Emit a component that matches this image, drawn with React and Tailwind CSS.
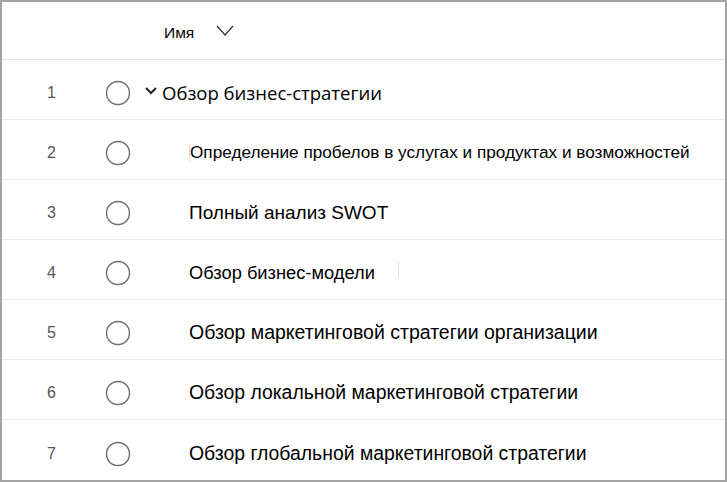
import React from 'react';

const rows = [
  { n: 1, text: 'Обзор бизнес-стратегии', size: 'text-[18.5px]', parent: true },
  { n: 2, text: 'Определение пробелов в услугах и продуктах и возможностей', size: 'text-[17.2px]', caret: true },
  { n: 3, text: 'Полный анализ SWOT', size: 'text-[19px]' },
  { n: 4, text: 'Обзор бизнес-модели', size: 'text-[18.3px]', tail: true },
  { n: 5, text: 'Обзор маркетинговой стратегии организации', size: 'text-[19.5px]' },
  { n: 6, text: 'Обзор локальной маркетинговой стратегии', size: 'text-[19.4px]' },
  { n: 7, text: 'Обзор глобальной маркетинговой стратегии', size: 'text-[19.4px]' },
];

const Circle = () => (
  <svg width="26" height="26" viewBox="0 0 26 26">
    <circle cx="13" cy="13" r="11.5" fill="none" stroke="#6b6b6b" strokeWidth="1.4" />
  </svg>
);

const App = () => {
  return (
    <div className="w-[727px] h-[482px] bg-white border-2 border-[#a3a3a3] font-['Liberation_Sans',Arial,sans-serif] text-black overflow-hidden">
      <div className="h-[58px] flex items-center border-b border-[#e6e6e6]">
        <div className="w-[162px]" />
        <span className="text-[15.5px] mt-[5px]">Имя</span>
        <svg className="ml-[22px]" width="18" height="11" viewBox="0 0 18 11">
          <path d="M1 1 L9 10 L17 1" fill="none" stroke="#333" strokeWidth="1.2" />
        </svg>
      </div>
      {rows.map((r) => (
        <div key={r.n} className="h-[60px] flex items-center pt-[7px] border-b border-[#ececec] last:border-b-0">
          <div className="w-[103px] pr-1 text-center text-[16px] text-[#555]">{r.n}</div>
          <Circle />
          {r.parent ? (
            <>
              <svg className="ml-[14px] mr-[5px] -mt-[5px]" width="12" height="8" viewBox="0 0 12 8">
                <path d="M1 1 L6 6 L11 1" fill="none" stroke="#222" strokeWidth="2" />
              </svg>
              <span className={`${r.size} font-['Open_Sans',sans-serif]`}>{r.text}</span>
            </>
          ) : (
            <div className="ml-[58px] flex items-center">
              {r.caret && <span className="w-px h-[18px] bg-[#e0e0e0]" />}
              <span className={r.size}>{r.text}</span>
              {r.tail && <span className="ml-[23px] w-px h-[16px] -mt-[8px] bg-[#e0e0e0]" />}
            </div>
          )}
        </div>
      ))}
    </div>
  );
};

export default App;
